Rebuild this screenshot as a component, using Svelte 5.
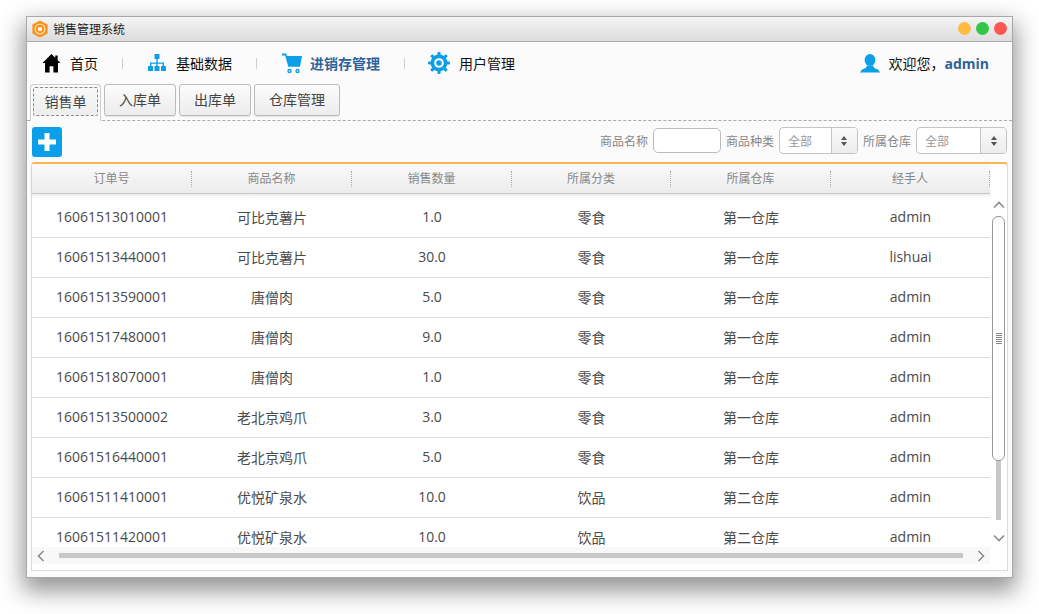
<script>
  const cols = ['订单号', '商品名称', '销售数量', '所属分类', '所属仓库', '经手人'];
  const rows = [
    ['16061513010001', '可比克薯片', '1.0', '零食', '第一仓库', 'admin'],
    ['16061513440001', '可比克薯片', '30.0', '零食', '第一仓库', 'lishuai'],
    ['16061513590001', '唐僧肉', '5.0', '零食', '第一仓库', 'admin'],
    ['16061517480001', '唐僧肉', '9.0', '零食', '第一仓库', 'admin'],
    ['16061518070001', '唐僧肉', '1.0', '零食', '第一仓库', 'admin'],
    ['16061513500002', '老北京鸡爪', '3.0', '零食', '第一仓库', 'admin'],
    ['16061516440001', '老北京鸡爪', '5.0', '零食', '第一仓库', 'admin'],
    ['16061511410001', '优悦矿泉水', '10.0', '饮品', '第二仓库', 'admin'],
    ['16061511420001', '优悦矿泉水', '10.0', '饮品', '第二仓库', 'admin']
  ];
  const tabs = ['入库单', '出库单', '仓库管理'];
</script>

<div class="page">
  <div class="window">
    <header class="titlebar">
      <svg class="logo" width="18" height="18" viewBox="0 0 18 18">
        <path d="M9 .4 16.6 4.6v8.8L9 17.6 1.4 13.4V4.6Z" fill="#f7931e" />
        <circle cx="9" cy="9" r="5.4" fill="#fdebd0" />
        <path d="M9 4.6c2.6 0 4.4 2 4.4 4.4S11.6 13.4 9 13.4 4.6 11.4 4.6 9 6.4 4.6 9 4.6Z" fill="#f7931e" />
        <rect x="7" y="7" width="4" height="4" rx="1" fill="#fff3df" />
      </svg>
      <span class="wintitle">销售管理系统</span>
      <div class="lights">
        <i class="light y"></i><i class="light g"></i><i class="light r"></i>
      </div>
    </header>

    <nav class="nav">
      <div class="navitem home">
        <svg width="19" height="20" viewBox="0 0 20 21"><path d="M10 1 0.5 10.5H3.2V20.5H8V14H12V20.5H16.8V10.5H19.5L16.5 7.5V2.5H14V5Z" fill="#000" /></svg>
        <span>首页</span>
      </div>
      <i class="sep"></i>
      <div class="navitem data">
        <svg width="18" height="18" viewBox="0 0 18 18" fill="#0a9fe8">
          <rect x="6.5" y="0" width="5" height="5" rx=".6" />
          <path d="M8.3 5h1.4v3.4H16v3.6h-1.4V9.8H9.7V12H8.3V9.8H3.4V12H2V8.4h6.3Z" />
          <rect x="0" y="12" width="5" height="5" rx=".6" /><rect x="6.5" y="12" width="5" height="5" rx=".6" /><rect x="13" y="12" width="5" height="5" rx=".6" />
        </svg>
        <span>基础数据</span>
      </div>
      <i class="sep"></i>
      <div class="navitem active">
        <svg width="20" height="21" viewBox="0 0 20 21" fill="#0a9fe8">
          <path d="M0 .5h4.2L5 3H20L18 13.8H6.3L3.2 2.6H0Z" />
          <circle cx="7.5" cy="18" r="2.2" /><circle cx="15.5" cy="18" r="2.2" />
          <circle cx="7.5" cy="18" r=".8" fill="#fff" /><circle cx="15.5" cy="18" r=".8" fill="#fff" />
        </svg>
        <span>进销存管理</span>
      </div>
      <i class="sep"></i>
      <div class="navitem user">
        <svg width="22" height="22" viewBox="0 0 21 21">
          <circle cx="10.5" cy="10.5" r="8" fill="#0a9fe8" />
          <g fill="#0a9fe8">
            <rect x="9" y="0" width="3" height="21" rx="1" />
            <rect x="9" y="0" width="3" height="21" rx="1" transform="rotate(45 10.5 10.5)" />
            <rect x="9" y="0" width="3" height="21" rx="1" transform="rotate(90 10.5 10.5)" />
            <rect x="9" y="0" width="3" height="21" rx="1" transform="rotate(135 10.5 10.5)" />
          </g>
          <circle cx="10.5" cy="10.5" r="4.6" fill="#fff" />
          <circle cx="10.5" cy="10.5" r="2.6" fill="#0a9fe8" />
        </svg>
        <span>用户管理</span>
      </div>
      <div class="welcome">
        <svg width="20" height="19" viewBox="0 0 20 19" fill="#0a9fe8">
          <ellipse cx="10" cy="6" rx="5.4" ry="6" />
          <path d="M7 11.5h6l1 2.2 4.2 2L20 18.5H0l1.8-2.8 4.2-2Z" />
        </svg>
        <span>欢迎您，</span><b>admin</b>
      </div>
    </nav>

    <div class="tabs">
      <div class="tab selected"><span class="focus">销售单</span></div>
      {#each tabs as t}
        <button class="tab-btn" class:wide={t.length === 4}>{t}</button>
      {/each}
    </div>

    <div class="toolbar">
      <button class="add" aria-label="添加">
        <svg width="20" height="20" viewBox="0 0 20 20"><path d="M7.5 1h5v6.5H19v5h-6.5V19h-5v-6.5H1v-5h6.5Z" fill="#fff" /></svg>
      </button>
      <div class="filters">
        <label for="name">商品名称</label>
        <input id="name" class="input" />
        <span class="lbl">商品种类</span>
        <div class="select s1"><span class="val">全部</span><span class="arrows"><i class="up"></i><i class="down"></i></span></div>
        <span class="lbl">所属仓库</span>
        <div class="select s2"><span class="val">全部</span><span class="arrows"><i class="up"></i><i class="down"></i></span></div>
      </div>
    </div>

    <section class="card">
      <div class="main">
        <div class="thead">
          {#each cols as c}<div class="th">{c}</div>{/each}
        </div>
        <div class="tbody">
          {#each rows as r}
            <div class="tr">
              {#each r as v}<div class="td">{v}</div>{/each}
            </div>
          {/each}
        </div>
        <div class="hbar">
          <svg width="8" height="12" viewBox="0 0 8 12"><path d="M6.5 1 1.5 6l5 5" fill="none" stroke="#8c8c8c" stroke-width="1.6" /></svg>
          <div class="htrack"></div>
          <svg width="8" height="12" viewBox="0 0 8 12"><path d="M1.5 1l5 5-5 5" fill="none" stroke="#8c8c8c" stroke-width="1.6" /></svg>
        </div>
      </div>
      <div class="vbar">
        <svg class="vup" width="12" height="8" viewBox="0 0 12 8"><path d="M1 6.5 6 1.5l5 5" fill="none" stroke="#8c8c8c" stroke-width="1.6" /></svg>
        <div class="vtrack">
          <div class="thumb"><span class="grip"></span></div>
        </div>
        <svg class="vdown" width="12" height="8" viewBox="0 0 12 8"><path d="M1 1.5l5 5 5-5" fill="none" stroke="#8c8c8c" stroke-width="1.6" /></svg>
      </div>
    </section>
  </div>
</div>

<style>
  :global(body) {
    margin: 0;
    background: #fff;
  }
  .page {
    width: 1039px;
    height: 614px;
    padding: 17px 27px 0;
    box-sizing: border-box;
    font-family: "Open Sans", "Noto Sans CJK SC", sans-serif;
    overflow: hidden;
  }
  .window {
    width: 985px;
    height: 560px;
    box-sizing: border-box;
    background: #fbfbfb;
    outline: 1px solid #a8a8a8;
    box-shadow: 0 10px 22px 4px rgba(0, 0, 0, 0.42);
    display: flex;
    flex-direction: column;
  }
  .titlebar {
    height: 25px;
    flex: none;
    box-sizing: border-box;
    border-bottom: 1px solid #aaa;
    background: linear-gradient(#f5f5f5, #dcdcdc);
    display: flex;
    align-items: center;
    padding: 0 5px 0 4px;
    gap: 4px;
  }
  .wintitle {
    font-size: 12px;
    color: #222;
  }
  .lights {
    margin-left: auto;
    display: flex;
    gap: 5px;
    margin-top: -2px;
  }
  .light {
    width: 13px;
    height: 13px;
    border-radius: 50%;
    display: block;
  }
  .y { background: #fdbc40; }
  .g { background: #33c748; }
  .r { background: #fc5753; }
  .nav {
    height: 42px;
    flex: none;
    display: flex;
    align-items: center;
    padding: 0 23px 0 15px;
    font-size: 14px;
    color: #111;
  }
  .navitem {
    display: flex;
    align-items: center;
    gap: 9px;
  }
  .data { gap: 10px; }
  .user { margin-left: -2px; }
  .active {
    color: #2f6299;
    font-weight: 700;
    gap: 8px;
  }
  .sep {
    width: 1px;
    height: 11px;
    background: #d0d0d0;
    margin: 0 25px 0 24px;
    display: block;
  }
  .welcome {
    margin-left: auto;
    display: flex;
    align-items: center;
  }
  .welcome svg { margin-right: 8px; }
  .welcome b {
    color: #2f6299;
    font-size: 14px;
    font-weight: 700;
  }
  .tabs {
    height: 37px;
    flex: none;
    box-sizing: border-box;
    border-bottom: 1px dashed #aaa;
    display: flex;
    align-items: flex-start;
    padding-left: 3px;
    gap: 3px;
    font-size: 14px;
    color: #444;
  }
  .tab {
    width: 71px;
    height: 37px;
    box-sizing: border-box;
    border: 1px solid #ccc;
    border-bottom: none;
    border-radius: 4px 4px 0 0;
    background: #fbfbfb;
    padding: 2px 2px 0;
  }
  .focus {
    display: flex;
    align-items: center;
    justify-content: center;
    height: 29px;
    box-sizing: border-box;
    padding-bottom: 1px;
    border: 1px dashed #888;
    border-radius: 2px;
    background: linear-gradient(#f8f8f8, #eee);
  }
  .tab-btn {
    width: 72px;
    height: 32px;
    padding: 0 0 2px;
    border: 1px solid #bbb;
    border-radius: 3px;
    background: linear-gradient(#fcfcfc, #ececec);
    font: inherit;
    color: #444;
    box-shadow: 0 1px 1px rgba(0, 0, 0, 0.1);
  }
  .tab-btn.wide { width: 86px; }
  .toolbar {
    height: 41px;
    flex: none;
    display: flex;
    align-items: center;
    padding: 0 5px;
    box-sizing: border-box;
  }
  .add {
    width: 30px;
    height: 30px;
    padding: 0;
    border: none;
    border-radius: 3px;
    background: #0a9fe8;
    display: flex;
    align-items: center;
    justify-content: center;
    margin-top: 1px;
  }
  .filters {
    margin-left: auto;
    margin-bottom: 2px;
    display: flex;
    align-items: center;
    gap: 5px;
    font-size: 12px;
    color: #888;
  }
  .input {
    width: 68px;
    height: 25px;
    box-sizing: border-box;
    border: 1px solid #bbb;
    border-radius: 5px;
    background: #fff;
  }
  .select {
    height: 27px;
    box-sizing: border-box;
    border: 1px solid #c4c4c4;
    border-radius: 4px;
    display: flex;
    background: #fff;
  }
  .s1 { width: 79px; }
  .s2 { width: 91px; }
  .val {
    flex: 1;
    display: flex;
    align-items: center;
    padding-left: 8px;
    color: #999;
  }
  .arrows {
    width: 25px;
    border-left: 1px solid #c4c4c4;
    background: linear-gradient(#fafafa, #ececec);
    border-radius: 0 3px 3px 0;
    display: flex;
    flex-direction: column;
    align-items: center;
    justify-content: center;
    gap: 2px;
  }
  .up, .down {
    width: 0;
    height: 0;
    border-left: 3.5px solid transparent;
    border-right: 3.5px solid transparent;
    display: block;
  }
  .up { border-bottom: 4px solid #555; }
  .down { border-top: 4px solid #555; }
  .card {
    margin: 0 4px;
    height: 409px;
    flex: none;
    box-sizing: border-box;
    border: 1px solid #dcdcdc;
    border-top: 2px solid #fab450;
    border-radius: 4px 4px 0 0;
    background: #fff;
    display: flex;
  }
  .main {
    width: 958px;
    display: flex;
    flex-direction: column;
    flex: none;
  }
  .thead {
    height: 30px;
    flex: none;
    box-sizing: border-box;
    padding-top: 1px;
    display: grid;
    grid-template-columns: 160px 160px 160px 159px 160px 159px;
    align-items: center;
    background: linear-gradient(#fafafa, #ececec);
    border-bottom: 1px solid #c8c8c8;
    box-shadow: 0 2px 3px rgba(0, 0, 0, 0.08);
    position: relative;
    font-size: 12px;
    color: #888;
  }
  .th {
    height: 16px;
    line-height: 16px;
    text-align: center;
    border-right: 1px dotted #aaa;
  }
  .tbody {
    flex: 1;
    min-height: 0;
    overflow: hidden;
    padding-top: 4px;
  }
  .tr {
    height: 40px;
    box-sizing: border-box;
    display: grid;
    grid-template-columns: 160px 160px 160px 159px 160px 159px;
    align-items: center;
    border-bottom: 1px solid #dcdcdc;
    padding-bottom: 2px;
    font-size: 14px;
    color: #4a4a4a;
  }
  .td { text-align: center; }
  .hbar {
    height: 17px;
    flex: none;
    margin-bottom: 6px;
    background: #f8f8f8;
    display: flex;
    align-items: center;
    padding: 0 5px;
    gap: 14px;
  }
  .htrack {
    flex: 1;
    height: 5px;
    background: #c8c8c8;
  }
  .vbar {
    flex: 1;
    position: relative;
    display: flex;
    flex-direction: column;
    align-items: center;
    padding-top: 37px;
  }
  .vtrack {
    width: 5px;
    height: 304px;
    background: #c8c8c8;
    margin-top: 7px;
    position: relative;
    display: flex;
    justify-content: center;
  }
  .thumb {
    flex: none;
    width: 13px;
    height: 245px;
    box-sizing: border-box;
    border: 1px solid #999;
    border-radius: 6px;
    background: #fdfdfd;
    display: flex;
    align-items: center;
    justify-content: center;
  }
  .grip {
    width: 6px;
    height: 12px;
    background: repeating-linear-gradient(#888 0 1px, transparent 1px 2px);
  }
  .vdown { margin-top: 14px; }
</style>
